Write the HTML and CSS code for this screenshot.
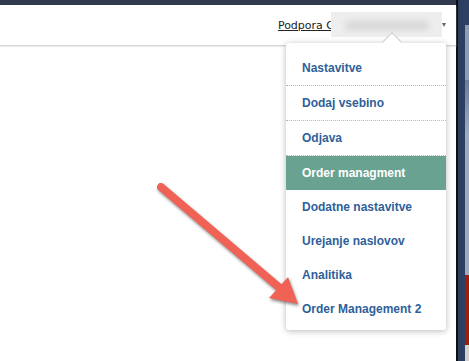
FILE: index.html
```html
<!DOCTYPE html>
<html>
	<head>
		<meta charset="utf-8">
		<title>Order managment</title>
		<link rel="stylesheet" href="styles.css">
	</head>
	<body>
		<div class="screen">
			<div class="app">
				<div class="topbar"></div>
				<div class="header">
					<div class="user">
						<a class="user-name" href="javascript:void(0)">Podpora C</a>
						<span class="redacted"><span class="smudge"></span></span>
						<span class="caret"></span>
					</div>
				</div>
				<div class="content"></div>

				<div class="dropdown">
					<span class="pointer"></span>
					<ul class="menu">
						<li class="sep"><a href="javascript:void(0)">Nastavitve</a></li>
						<li class="sep"><a href="javascript:void(0)">Dodaj vsebino</a></li>
						<li class="sep"><a href="javascript:void(0)">Odjava</a></li>
						<li class="current"><a href="javascript:void(0)">Order managment</a></li>
						<li><a href="javascript:void(0)">Dodatne nastavitve</a></li>
						<li><a href="javascript:void(0)">Urejanje naslovov</a></li>
						<li><a href="javascript:void(0)">Analitika</a></li>
						<li><a href="javascript:void(0)">Order Management 2</a></li>
					</ul>
				</div>

				<svg class="arrow" width="456" height="361" viewBox="0 0 456 361">
					<line x1="161" y1="187" x2="281" y2="289" stroke="#ef6255" stroke-width="8" stroke-linecap="round"/>
					<polygon points="269,298 288,277 298,304" fill="#ef6255"/>
				</svg>
			</div>
			<div class="rail"></div>
			<div class="side">
				<div class="s1"></div>
				<div class="s2"></div>
				<div class="s3"></div>
				<div class="s4"></div>
				<div class="s5"></div>
				<div class="s6"></div>
			</div>
		</div>
	</body>
</html>
```

FILE: styles.css
```css
* {
	padding: 0;
	margin: 0;
	box-sizing: border-box;
}
ul {
	list-style: none;
}
a {
	text-decoration: none;
}
html, body {
	width: 100%;
	height: 100%;
	overflow: hidden;
}
.screen {
	display: flex;
	height: 361px;
}
.app {
	position: relative;
	width: 456px;
	height: 100%;
	background: #fff;
	display: flex;
	flex-direction: column;
}
.topbar {
	height: 5px;
	background: #323b4e;
}
.header {
	height: 41px;
	display: flex;
	justify-content: flex-end;
	align-items: center;
	padding-right: 10px;
	border-bottom: 1px solid #d6d6d6;
	box-shadow: 0 1px 1px #ececec;
}
.user {
	display: flex;
	align-items: center;
	margin-top: -2px;
}
.user-name {
	font-family: "DejaVu Sans", Verdana, sans-serif;
	font-size: 11px;
	color: #222;
	text-decoration: underline;
	padding-top: 3px;
}
.redacted {
	display: flex;
	align-items: center;
	justify-content: center;
	width: 111px;
	height: 25px;
	margin-left: -3px;
	background: #eeeeee;
}
.smudge {
	width: 84px;
	height: 9px;
	margin-top: 3px;
	border-radius: 5px;
	background: #d6d6d6;
	filter: blur(3px);
}
.caret {
	width: 0;
	height: 0;
	margin-left: 0;
	margin-top: 2px;
	border-left: 2px solid transparent;
	border-right: 2px solid transparent;
	border-top: 4px solid #666;
}
.content {
	flex: 1;
}
.dropdown {
	position: absolute;
	left: 286px;
	top: 43px;
	width: 160px;
	height: 287px;
	background: #fff;
	border-radius: 3px;
	box-shadow: 0 1px 6px rgba(0, 0, 0, 0.28);
	padding: 8px 0 4px;
}
.pointer {
	position: absolute;
	left: 99px;
	top: -8px;
	width: 14px;
	height: 14px;
	background: #fff;
	border-left: 1px solid #ccc;
	border-top: 1px solid #ccc;
	transform: rotate(45deg);
}
.menu li {
	height: 34px;
	display: flex;
	align-items: center;
	padding-left: 16px;
}
.menu li.sep {
	height: 35px;
	border-bottom: 1px dotted #b8b8b8;
}
.menu li a {
	font-family: "Liberation Sans", Arial, sans-serif;
	font-size: 12px;
	font-weight: 700;
	color: #2f5f99;
}
.menu li.current {
	background: #69a290;
}
.menu li.current a {
	color: #fff;
}
.arrow {
	position: absolute;
	left: 0;
	top: 0;
	filter: drop-shadow(1px 2px 1.5px rgba(0, 0, 0, 0.45));
}
.rail {
	width: 2px;
	background: #0e0e10;
}
.side {
	flex: 1;
	display: flex;
	flex-direction: column;
	background: #2b3f61;
	padding-left: 7px;
}
.side div {
	background: #9ea9bb;
}
.side .s1 { height: 25px; background: #2c4163; }
.side .s2 { height: 55px; background: #8e9cb3; }
.side .s3 { height: 57px; background: linear-gradient(#6b7c99, #a2adbf); }
.side .s4 { height: 138px; }
.side .s5 { height: 70px; background: #a11b0d; }
.side .s6 { flex: 1; background: #d9cfc6; }
```
